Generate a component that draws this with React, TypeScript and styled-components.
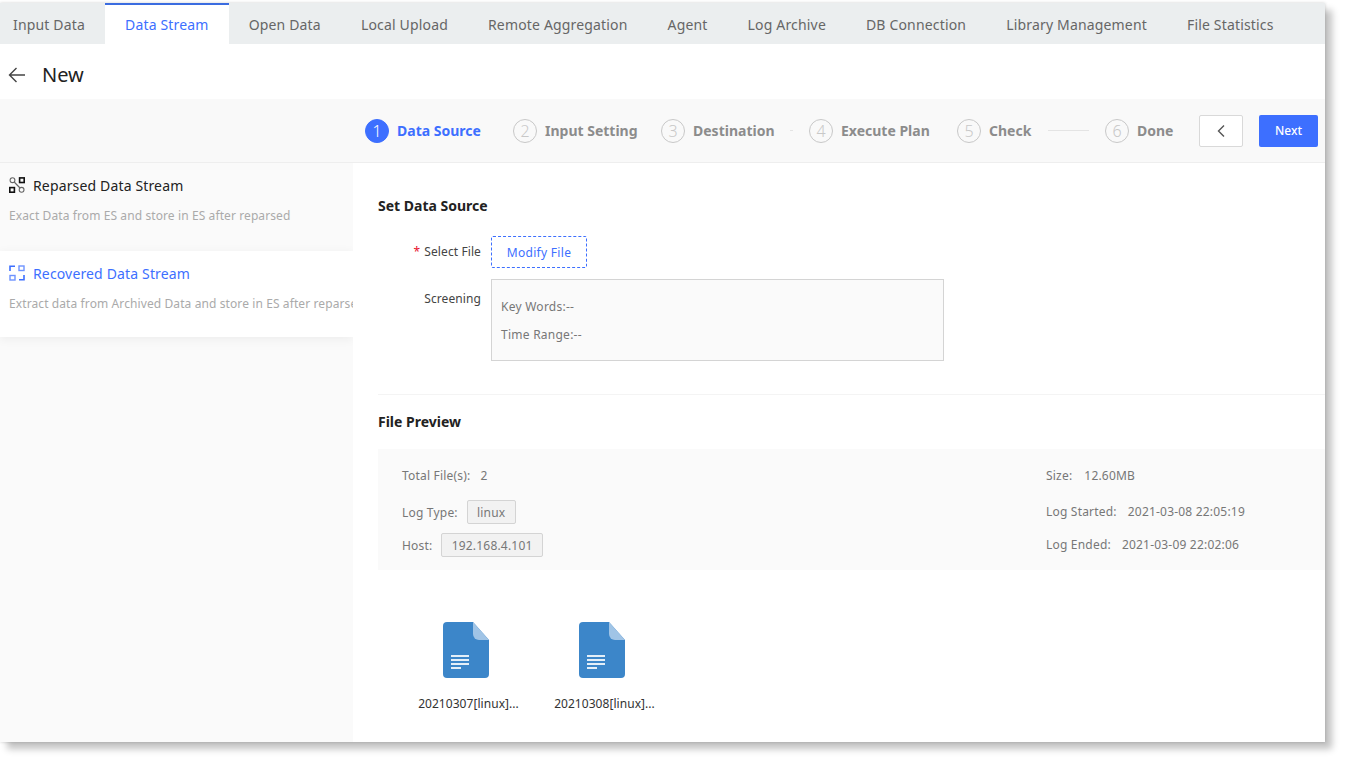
import React from "react";
import styled, { createGlobalStyle } from "styled-components";

const Global = createGlobalStyle`
  html, body { margin: 0; padding: 0; background: #fff; min-height: 762px; }
  body { font-family: "Noto Sans", "Open Sans", sans-serif; color: #333; }
  #root { min-height: 762px; padding-top: 3px; }
  * { box-sizing: border-box; }
`;

const Page = styled.div`
  width: 1325px;
  height: 739px;
  background: #fff;
  display: flex;
  flex-direction: column;
  box-shadow: 7px 7px 7px rgba(0, 0, 0, 0.24), 0 0 3px rgba(0, 0, 0, 0.18);
  overflow: hidden;
`;

const TabBar = styled.div`
  display: flex;
  height: 41px;
  flex: none;
  background: #ebeeef;
`;

const Tab = styled.div<{ $active?: boolean; $first?: boolean }>`
  padding: 0 20px 0 ${(p) => (p.$first ? "13px" : "20px")};
  display: flex;
  align-items: center;
  font-size: 14px;
  letter-spacing: 0.17px;
  white-space: nowrap;
  color: ${(p) => (p.$active ? "#3d6fff" : "#666")};
  background: ${(p) => (p.$active ? "#fff" : "transparent")};
  border-top: 2px solid ${(p) => (p.$active ? "#3b6ce0" : "transparent")};
`;

const TitleBar = styled.div`
  height: 55px;
  flex: none;
  display: flex;
  align-items: center;
  padding: 6px 0 0 8px;
  gap: 16px;
  color: #222;
`;

const Title = styled.div`
  font-size: 20px;
`;

const StepBar = styled.div`
  height: 64px;
  flex: none;
  display: flex;
  align-items: center;
  justify-content: flex-end;
  padding-right: 7px;
  background: #f9f9f9;
  border-bottom: 1px solid #eee;
`;

const Step = styled.div`
  display: flex;
  align-items: center;
  gap: 8px;
`;

const StepNumber = styled.div<{ $active?: boolean }>`
  width: 24px;
  height: 24px;
  border-radius: 50%;
  display: flex;
  align-items: center;
  justify-content: center;
  font-size: 16px;
  font-weight: 300;
  color: ${(p) => (p.$active ? "#fff" : "#c8c8c8")};
  background: ${(p) => (p.$active ? "#3d6fff" : "transparent")};
  border: 1px solid ${(p) => (p.$active ? "#3d6fff" : "#c8c8c8")};
`;

const StepLabel = styled.div<{ $active?: boolean; $w: number }>`
  width: ${(p) => p.$w}px;
  font-size: 14px;
  font-weight: 700;
  white-space: nowrap;
  color: ${(p) => (p.$active ? "#3d6fff" : "#8c8c8c")};
`;

const Connector = styled.div<{ $space: number; $line: number }>`
  width: ${(p) => p.$space}px;
  display: flex;
  justify-content: center;
  &::after {
    content: "";
    width: ${(p) => p.$line}px;
    height: 1px;
    background: #e4e4e4;
  }
`;

const PrevButton = styled.button`
  width: 44px;
  height: 32px;
  margin-left: 24px;
  background: #fff;
  border: 1px solid #d9d9d9;
  border-radius: 2px;
  padding: 0;
  display: flex;
  align-items: center;
  justify-content: center;
  color: #555;
`;

const NextButton = styled.button`
  width: 59px;
  height: 32px;
  margin-left: 16px;
  background: #3d6fff;
  border: 0;
  border-radius: 2px;
  padding: 0;
  color: #fff;
  font-family: inherit;
  font-size: 12px;
  font-weight: 500;
`;

const Body = styled.div`
  flex: 1;
  display: flex;
  min-height: 0;
`;

const Sidebar = styled.div`
  width: 353px;
  flex: none;
  background: #fafafa;
  overflow: hidden;
`;

const SideItem = styled.div<{ $active?: boolean }>`
  padding: 12px 0 0 9px;
  height: ${(p) => (p.$active ? "86px" : "88px")};
  overflow: hidden;
  background: ${(p) => (p.$active ? "#fff" : "transparent")};
  box-shadow: ${(p) => (p.$active ? "0 2px 10px rgba(0,0,0,0.06)" : "none")};
  position: relative;
`;

const SideTitle = styled.div<{ $active?: boolean }>`
  display: flex;
  align-items: center;
  gap: 8px;
  height: 20px;
  font-size: 14px;
  letter-spacing: 0.15px;
  white-space: nowrap;
  color: ${(p) => (p.$active ? "#3d6fff" : "#222")};
`;

const SideDesc = styled.div`
  margin-top: 12px;
  font-size: 12px;
  line-height: 18px;
  letter-spacing: 0.1px;
  white-space: nowrap;
  color: #aaa;
`;

const Main = styled.div`
  flex: 1;
  min-width: 0;
  padding-left: 25px;
  display: flex;
  flex-direction: column;
`;

const SectionTitle = styled.div`
  font-size: 14px;
  font-weight: 700;
  line-height: 20px;
  color: #222;
`;

const SourceSection = styled.div`
  height: 232px;
  flex: none;
  padding-top: 33px;
  border-bottom: 1px solid #f4f4f4;
`;

const Form = styled.div`
  margin-top: 20px;
  display: flex;
  flex-direction: column;
  gap: 11px;
`;

const FormRow = styled.div`
  display: grid;
  grid-template-columns: 103px auto;
  column-gap: 10px;
  justify-content: start;
`;

const FieldLabel = styled.div<{ $pad: number }>`
  text-align: right;
  font-size: 12px;
  line-height: 18px;
  letter-spacing: 0.1px;
  padding-top: ${(p) => p.$pad}px;
  color: #444;
  white-space: nowrap;
`;

const Required = styled.span`
  color: #e8112d;
  margin-right: 4px;
`;

const ModifyButton = styled.button`
  width: 96px;
  height: 32px;
  background: #fff;
  border: 1px dashed #3d6fff;
  border-radius: 2px;
  padding: 0;
  font-family: inherit;
  font-size: 12px;
  letter-spacing: 0.3px;
  color: #3d6fff;
`;

const ScreeningBox = styled.div`
  width: 453px;
  height: 82px;
  padding: 13px 9px;
  background: #fafafa;
  border: 1px solid #d4d4d4;
  font-size: 12px;
  line-height: 28px;
  letter-spacing: 0.25px;
  color: #777;
`;

const PreviewSection = styled.div`
  padding-top: 17px;
`;

const SummaryPanel = styled.div`
  height: 121px;
  margin-top: 17px;
  padding: 16px 0 0 24px;
  background: #fafafa;
  display: grid;
  grid-template-columns: 644px 1fr;
  font-size: 12px;
  letter-spacing: 0.2px;
  color: #777;
`;

const SummaryColumn = styled.div`
  display: flex;
  flex-direction: column;
`;

const SummaryRow = styled.div<{ $h: number }>`
  height: ${(p) => p.$h}px;
  display: flex;
  align-items: center;
  white-space: nowrap;
`;

const Value = styled.span<{ $gap: number }>`
  margin-left: ${(p) => p.$gap}px;
`;

const Tag = styled.span`
  margin-left: 9px;
  height: 24px;
  padding: 0 9.2px;
  display: inline-flex;
  align-items: center;
  background: #f2f2f2;
  border: 1px solid #d4d4d4;
  border-radius: 2px;
  color: #777;
`;

const FileList = styled.div`
  display: flex;
  padding: 52px 0 0 20px;
`;

const FileItem = styled.div`
  width: 136px;
  display: flex;
  flex-direction: column;
  align-items: center;
`;

const FileName = styled.div`
  margin-top: 17px;
  padding-left: 5px;
  font-size: 12px;
  line-height: 18px;
  letter-spacing: 0.05px;
  color: #333;
  white-space: nowrap;
`;

const BackIcon = () => (
  <svg width="18" height="18" viewBox="0 0 18 18" fill="none" stroke="#444" strokeWidth="1.4">
    <path d="M17 9H1.5M8.5 2L1.5 9l7 7" />
  </svg>
);

const ChevronIcon = () => (
  <svg width="10" height="14" viewBox="0 0 10 14" fill="none" stroke="#555" strokeWidth="1.4">
    <path d="M8 1.5L2.5 7 8 12.5" />
  </svg>
);

const ReparsedIcon = () => (
  <svg width="16" height="16" viewBox="0 0 16 16" fill="none">
    <circle cx="3.5" cy="3.2" r="2.4" stroke="#666" strokeWidth="1.1" />
    <rect x="10.6" y="0.9" width="4.6" height="4.6" stroke="#111" strokeWidth="1.6" />
    <rect x="0.8" y="10.6" width="4.6" height="4.6" stroke="#111" strokeWidth="1.6" />
    <circle cx="12.6" cy="12.8" r="2.4" stroke="#666" strokeWidth="1.1" />
    <path d="M5.2 5l5.8 6" stroke="#666" strokeWidth="1.1" />
  </svg>
);

const RecoveredIcon = () => (
  <svg width="16" height="16" viewBox="0 0 16 16" fill="none" stroke="#3d6fff" strokeWidth="1.6">
    <path d="M1 6V1.2h5" />
    <rect x="10" y="1" width="5" height="4.5" strokeWidth="1.4" opacity="0.75" />
    <rect x="1" y="10.5" width="5" height="4.5" strokeWidth="1.4" opacity="0.75" />
    <path d="M15 10v4.8h-5" />
  </svg>
);

const DocIcon = () => (
  <svg width="46" height="56" viewBox="0 0 46 56">
    <path d="M4 0h26l16 18v34a4 4 0 0 1-4 4H4a4 4 0 0 1-4-4V4a4 4 0 0 1 4-4z" fill="#3c86c9" />
    <path d="M30 0l16 18H36a6 6 0 0 1-6-6z" fill="#a0c4e6" />
    <path d="M8 33h18v2H8zM8 37h18v2H8zM8 41h18v2H8zM8 45h10v2H8z" fill="#e4eff8" />
  </svg>
);

const tabs = [
  "Input Data",
  "Data Stream",
  "Open Data",
  "Local Upload",
  "Remote Aggregation",
  "Agent",
  "Log Archive",
  "DB Connection",
  "Library Management",
  "File Statistics",
];

export default function App() {
  return (
    <Page>
      <Global />
      <TabBar>
        {tabs.map((t, i) => (
          <Tab key={t} $first={i === 0} $active={i === 1}>
            {t}
          </Tab>
        ))}
      </TabBar>
      <TitleBar>
        <BackIcon />
        <Title>New</Title>
      </TitleBar>
      <StepBar>
        <Step>
          <StepNumber $active>1</StepNumber>
          <StepLabel $active $w={85}>Data Source</StepLabel>
        </Step>
        <Connector $space={31} $line={0} />
        <Step>
          <StepNumber>2</StepNumber>
          <StepLabel $w={92}>Input Setting</StepLabel>
        </Step>
        <Connector $space={24} $line={0} />
        <Step>
          <StepNumber>3</StepNumber>
          <StepLabel $w={80}>Destination</StepLabel>
        </Step>
        <Connector $space={36} $line={3} />
        <Step>
          <StepNumber>4</StepNumber>
          <StepLabel $w={88}>Execute Plan</StepLabel>
        </Step>
        <Connector $space={28} $line={0} />
        <Step>
          <StepNumber>5</StepNumber>
          <StepLabel $w={42}>Check</StepLabel>
        </Step>
        <Connector $space={74} $line={41} />
        <Step>
          <StepNumber>6</StepNumber>
          <StepLabel $w={38}>Done</StepLabel>
        </Step>
        <PrevButton aria-label="Previous">
          <ChevronIcon />
        </PrevButton>
        <NextButton>Next</NextButton>
      </StepBar>
      <Body>
        <Sidebar>
          <SideItem>
            <SideTitle>
              <ReparsedIcon />
              Reparsed Data Stream
            </SideTitle>
            <SideDesc>Exact Data from ES and store in ES after reparsed</SideDesc>
          </SideItem>
          <SideItem $active>
            <SideTitle $active>
              <RecoveredIcon />
              Recovered Data Stream
            </SideTitle>
            <SideDesc>Extract data from Archived Data and store in ES after reparsed</SideDesc>
          </SideItem>
        </Sidebar>
        <Main>
          <SourceSection>
            <SectionTitle>Set Data Source</SectionTitle>
            <Form>
              <FormRow>
                <FieldLabel $pad={7}>
                  <Required>*</Required>Select File
                </FieldLabel>
                <ModifyButton>Modify File</ModifyButton>
              </FormRow>
              <FormRow>
                <FieldLabel $pad={11}>Screening</FieldLabel>
                <ScreeningBox>
                  <div>Key Words:--</div>
                  <div>Time Range:--</div>
                </ScreeningBox>
              </FormRow>
            </Form>
          </SourceSection>
          <PreviewSection>
            <SectionTitle>File Preview</SectionTitle>
            <SummaryPanel>
              <SummaryColumn>
                <SummaryRow $h={20}>
                  Total File(s):<Value $gap={10}>2</Value>
                </SummaryRow>
                <SummaryRow $h={54}>
                  Log Type:<Tag>linux</Tag>
                </SummaryRow>
                <SummaryRow $h={12}>
                  Host:<Tag>192.168.4.101</Tag>
                </SummaryRow>
              </SummaryColumn>
              <SummaryColumn>
                <SummaryRow $h={20}>
                  Size:<Value $gap={12}>12.60MB</Value>
                </SummaryRow>
                <SummaryRow $h={52}>
                  Log Started:<Value $gap={11}>2021-03-08 22:05:19</Value>
                </SummaryRow>
                <SummaryRow $h={14}>
                  Log Ended:<Value $gap={11}>2021-03-09 22:02:06</Value>
                </SummaryRow>
              </SummaryColumn>
            </SummaryPanel>
            <FileList>
              <FileItem>
                <DocIcon />
                <FileName>20210307[linux]...</FileName>
              </FileItem>
              <FileItem>
                <DocIcon />
                <FileName>20210308[linux]...</FileName>
              </FileItem>
            </FileList>
          </PreviewSection>
        </Main>
      </Body>
    </Page>
  );
}
